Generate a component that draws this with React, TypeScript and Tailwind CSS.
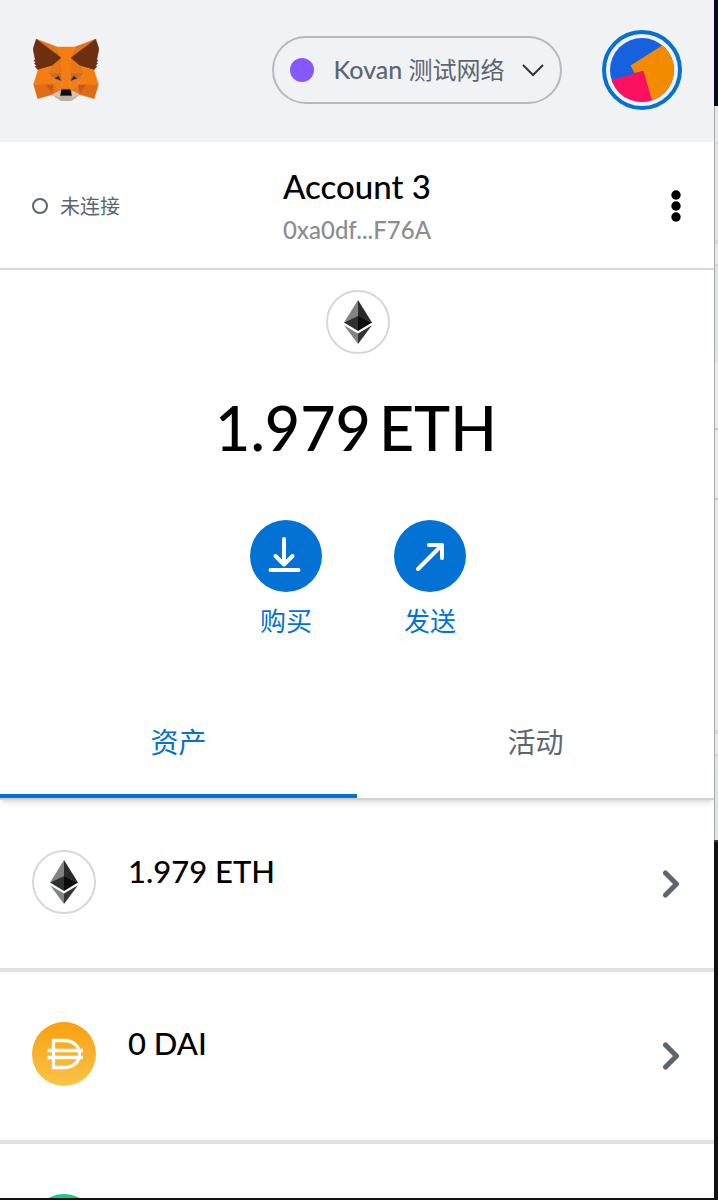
import React from "react";

const foxShapes: [string, string][] = [
  ["#E2761B", "274.1,35.5 174.6,109.4 193,65.8"],
  ["#E4761B", "44.4,35.5 143.1,110.1 125.6,65.8"],
  ["#E06C15", "238.3,206.8 211.8,247.4 268.5,263 284.8,207.7"],
  ["#E06C15", "33.9,207.7 50.1,263 106.8,247.4 80.3,206.8"],
  ["#E87616", "103.6,138.2 87.8,162.1 144.1,164.6 142.1,104.1"],
  ["#E87616", "214.9,138.2 175.9,103.4 174.6,164.6 230.8,162.1"],
  ["#E4761B", "106.8,247.4 140.6,230.9 111.4,208.1"],
  ["#E4761B", "177.9,230.9 211.8,247.4 207.1,208.1"],
  ["#D7C1B3", "211.8,247.4 177.9,230.9 180.6,253 180.3,262.3"],
  ["#D7C1B3", "106.8,247.4 138.3,262.3 138.1,253 140.6,230.9"],
  ["#CD5613", "106.8,247.4 111.6,206.8 80.3,207.7"],
  ["#CD5613", "207,206.8 211.8,247.4 238.3,207.7"],
  ["#DE6714", "230.8,162.1 174.6,164.6 179.8,193.5 188.1,176.1 208.1,185.2"],
  ["#DE6714", "110.6,185.2 130.6,176.1 138.8,193.5 144.1,164.6 87.8,162.1"],
  ["#E4751F", "87.8,162.1 111.4,208.1 110.6,185.2"],
  ["#E4751F", "208.1,185.2 207.1,208.1 230.8,162.1"],
  ["#E4751F", "144.1,164.6 138.8,193.5 145.4,227.6 146.9,182.7"],
  ["#E4751F", "174.6,164.6 171.9,182.6 173.1,227.6 179.8,193.5"],
  ["#F47D12", "179.8,193.5 173.1,227.6 177.9,230.9 207.1,208.1 208.1,185.2"],
  ["#F47D12", "110.6,185.2 111.4,208.1 140.6,230.9 145.4,227.6 138.8,193.5"],
  ["#C0AD9E", "180.3,262.3 180.6,253 178.1,250.8 140.4,250.8 138.1,253 138.3,262.3 106.8,247.4 117.8,256.4 140.1,271.9 178.4,271.9 200.8,256.4 211.8,247.4"],
  ["#6C2F0F", "278.3,114.2 286.8,73.4 274.1,35.5 177.9,106.9 214.9,138.2 267.2,153.5 278.8,140 273.8,136.4 281.8,129.1 275.6,124.3 283.6,118.2"],
  ["#6C2F0F", "31.8,73.4 40.3,114.2 34.9,118.2 42.9,124.3 36.8,129.1 44.8,136.4 39.8,140 51.3,153.5 103.6,138.2 140.6,106.9 44.4,35.5"],
  ["#F47D12", "267.2,153.5 214.9,138.2 230.8,162.1 207.1,208.1 238.3,207.7 284.8,207.7"],
  ["#F47D12", "103.6,138.2 51.3,153.5 33.9,207.7 80.3,207.7 111.4,208.1 87.8,162.1"],
  ["#F47D12", "174.6,164.6 177.9,106.9 193.1,65.8 125.6,65.8 140.6,106.9 144.1,164.6 145.3,182.8 145.4,227.6 173.1,227.6 173.3,182.8"],
  ["#0A0A0A", "177.9,230.9 173.1,227.6 145.4,227.6 140.6,230.9 138.1,253 140.4,250.8 178.1,250.8 180.6,253"],
  ["#233447", "138.8,193.5 114.6,185.2 130.5,176.1"],
  ["#233447", "179.7,193.5 188,176.1 204,185.2"],
];

function Fox() {
  return (
    <svg viewBox="31.8 35.5 255 236.4" preserveAspectRatio="none" className="h-[62px] w-[66px]" aria-hidden="true">
      {foxShapes.map(([fill, points], i) => (
        <polygon key={i} fill={fill} stroke={fill} strokeWidth="1.5" strokeLinejoin="round" points={points} />
      ))}
    </svg>
  );
}

function EthIcon() {
  return (
    <span className="flex size-16 shrink-0 items-center justify-center rounded-full border-2 border-[#d6d9dc] bg-white">
      <svg viewBox="0 0 28 44" className="h-11 w-7" aria-hidden="true">
        <path fill="#828384" d="M14 0v16.5L0 22.5z" />
        <path fill="#2b2b2b" d="M14 0v16.5l14 6z" />
        <path fill="#2f3030" d="M14 16v15L0 22.5z" />
        <path fill="#0b0b0b" d="M14 16v15l14-8.500z" />
        <path fill="#828384" d="M0 25.200l14 8.300V44z" />
        <path fill="#343535" d="M28 25.200l-14 8.300V44z" />
      </svg>
    </span>
  );
}

function DaiIcon() {
  return (
    <svg viewBox="0 0 64 64" className="size-16 shrink-0" aria-hidden="true">
      <defs>
        <linearGradient id="dai" x1="0" y1="0" x2="0" y2="1">
          <stop offset="0" stopColor="#f9a00f" />
          <stop offset="1" stopColor="#fbc349" />
        </linearGradient>
      </defs>
      <circle cx="32" cy="32" r="32" fill="url(#dai)" />
      <g fill="none" stroke="#fff" strokeWidth="3.300">
        <path d="M21.500 18.500H32c9 0 15.500 5.500 15.500 13.500S41 45.500 32 45.500H21.500z" />
        <path d="M15.500 28.500h35.500M15.500 35.500h35.500" />
      </g>
    </svg>
  );
}

function Chevron() {
  return (
    <svg viewBox="0 0 18 28" className="h-7 w-[18px] shrink-0 self-center" fill="none" stroke="#5b6670" strokeWidth="5" strokeLinecap="round" strokeLinejoin="round" aria-hidden="true">
      <path d="M3.500 3L14.500 14L3.500 25" />
    </svg>
  );
}

function TokenRow({ icon, label }: { icon: React.ReactNode; label: string }) {
  return (
    <li className="border-b-4 border-[#e1e1e1]">
      <button className="flex min-h-[168px] w-full pr-[34px] pl-8 text-left">
        <span className="pt-[50px]">{icon}</span>
        <span className="ml-8 flex-1 pt-[53px] text-[31px] leading-9 font-medium">{label}</span>
        <Chevron />
      </button>
    </li>
  );
}

function Action({ label, children }: { label: string; children: React.ReactNode }) {
  return (
    <button className="flex w-[72px] flex-col items-center gap-3 text-[#0471d4]">
      <span className="flex size-[72px] items-center justify-center rounded-full bg-[#0471d4]">{children}</span>
      <span className="text-[26px] leading-[34px]">{label}</span>
    </button>
  );
}

export default function App() {
  return (
    <div className="flex h-screen overflow-hidden bg-[#111111] font-['Lato','Noto_Sans_CJK_SC',sans-serif] text-black">
      <main className="mb-0.5 flex min-w-0 flex-1 flex-col overflow-hidden bg-white">
        <header className="flex h-[142px] shrink-0 items-start justify-between bg-[#f0f2f4] pt-[30px] pr-8 pl-[33px]">
          <div className="pt-[9px]">
            <Fox />
          </div>
          <div className="flex items-center gap-10">
            <button className="flex h-[68px] w-[290px] items-center rounded-full border-2 border-[#b4bac1] px-4 text-[#5b6670]">
              <span className="size-6 shrink-0 rounded-full bg-[#8858ff]" />
              <span className="flex-1 pl-0.5 text-center text-2xl whitespace-nowrap">
                <span className="text-[25px] font-medium">Kovan</span> 测试网络
              </span>
              <svg viewBox="0 0 22 13" className="h-[13px] w-[22px]" fill="none" stroke="#33373b" strokeWidth="2" aria-hidden="true">
                <path d="M1 1l10 10L21 1" />
              </svg>
            </button>
            <button aria-label="Account menu" className="flex size-20 items-center justify-center rounded-full border-4 border-[#0471d4]">
              <svg viewBox="0 0 64 64" className="size-16" aria-hidden="true">
                <clipPath id="avatar">
                  <circle cx="32" cy="32" r="32" />
                </clipPath>
                <g clipPath="url(#avatar)">
                  <path fill="#1661e0" d="M0 0h64v64H0z" />
                  <path fill="#f38b00" d="M20.500 27.500L64 0v64H42L33 33l-8.500 2z" />
                  <path fill="#fb1160" d="M0 42.500L33.500 33l9 31H0z" />
                </g>
              </svg>
            </button>
          </div>
        </header>

        <section className="grid h-32 shrink-0 grid-cols-[1fr_auto_1fr] items-center border-b-2 border-[#d2d8dd] px-8 pt-0.5">
          <div className="flex items-center gap-3 text-xl text-[#5b6670]">
            <span className="size-4 rounded-full border-2 border-[#5b6670]" />
            <span>未连接</span>
          </div>
          <button className="flex flex-col items-center">
            <span className="text-[33px] leading-10 font-medium">Account 3</span>
            <span className="pt-2 text-2xl leading-8 font-medium text-[#8b8e90]">0xa0df...F76A</span>
          </button>
          <button aria-label="Account options" className="justify-self-end">
            <svg viewBox="0 0 12 32" className="h-8 w-3" aria-hidden="true">
              <circle cx="6" cy="5" r="4.700" />
              <circle cx="6" cy="16" r="4.700" />
              <circle cx="6" cy="27" r="4.700" />
            </svg>
          </button>
        </section>

        <section className="flex shrink-0 flex-col items-center pt-5 pl-0.5">
          <EthIcon />
          <p className="mt-[34px] flex gap-2 pr-1 text-[61px] leading-20 font-medium">
            <span>1.979</span>
            <span>ETH</span>
          </p>
          <div className="mt-[52px] flex gap-[72px]">
            <Action label="购买">
              <svg viewBox="0 0 36 40" className="h-10 w-9" fill="none" stroke="#fff" strokeWidth="4" strokeLinecap="round" strokeLinejoin="round" aria-hidden="true">
                <path d="M16 3v25M7.500 20l8.500 8.500L24.500 20M2.500 34h28" />
              </svg>
            </Action>
            <Action label="发送">
              <svg viewBox="0 0 30 30" className="size-[30px]" fill="none" stroke="#fff" strokeWidth="4" strokeLinecap="round" strokeLinejoin="round" aria-hidden="true">
                <path d="M3 28L27 4M14 4h13v13" />
              </svg>
            </Action>
          </div>
        </section>

        <div role="tablist" className="z-10 mt-[46px] grid shrink-0 grid-cols-2 border-b-2 border-[#d2d2d2] text-[28px] leading-9 shadow-md">
          <button role="tab" aria-selected="true" className="border-b-4 border-[#0471d4] pt-10 pb-[34px] text-[#0471d4]">
            资产
          </button>
          <button role="tab" aria-selected="false" className="border-b-4 border-transparent pt-10 pb-[34px] text-[#5b6670]">
            活动
          </button>
        </div>

        <ul className="shrink-0">
          <TokenRow icon={<EthIcon />} label="1.979 ETH" />
          <TokenRow icon={<DaiIcon />} label="0 DAI" />
          <li className="px-8 pt-[50px]">
            <span className="block size-16 rounded-full bg-[#1fc690]" />
          </li>
        </ul>
      </main>

      <div aria-hidden="true" className="flex w-1 shrink-0 flex-col">
        <div className="h-[106px] bg-[#010d18]" />
        <div className="flex h-[734px] flex-col border-l border-[#a9a9ab]">
          <div className="h-[38px] border-b-2 border-[#d6d6e0] bg-[#e8e8e8]" />
          <div className="h-[100px] border-b-4 border-[#d6d6e0] bg-[#e0e2e2]" />
          <div className="h-[22px] border-b-2 border-[#d6d6e0] bg-[#e8e8e8]" />
          <div className="h-24 bg-[#dfe2e2]" />
          <div className="h-[68px] border-b-2 border-[#c4c4cc] bg-[#ebebeb]" />
          <div className="h-[70px] border-b-2 border-[#c4c4cc] bg-[#ebebeb]" />
          <div className="h-[234px] border-b-4 border-[#d6d6e0] bg-[#e8e8e8]" />
          <div className="h-[22px] border-b-2 border-[#d6d6e0] bg-[#e8e8e8]" />
          <div className="flex-1 bg-[#dfe2e2]" />
        </div>
        <div className="flex-1 border-t-2 border-[#3a3a3a] bg-[#111111]" />
      </div>
    </div>
  );
}
